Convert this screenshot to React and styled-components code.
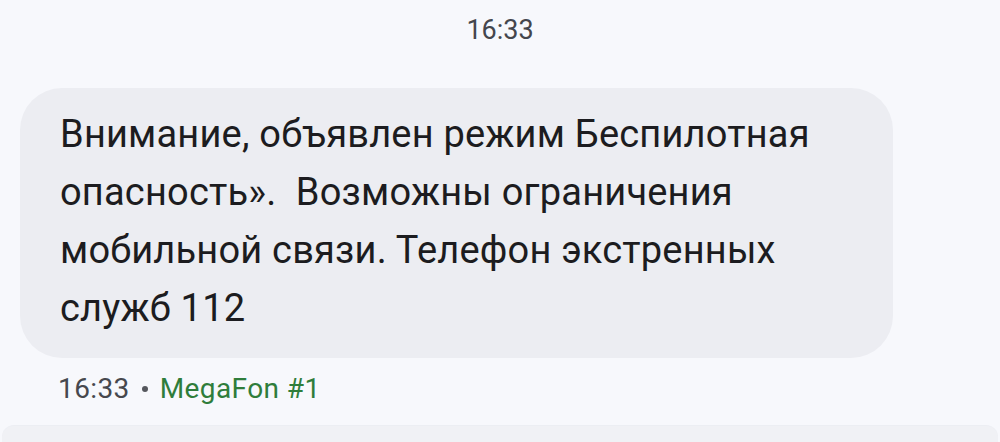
import React from 'react';
import styled, { createGlobalStyle } from 'styled-components';

const GlobalStyle = createGlobalStyle`
  html, body {
    margin: 0;
    padding: 0;
    background: #f7f8fc;
  }
  body {
    font-family: Roboto, "Noto Sans", "Liberation Sans", sans-serif;
  }
`;

const Screen = styled.div`
  width: 1000px;
  height: 442px;
  overflow: hidden;
  background: #f7f8fc;
  display: flex;
  flex-direction: column;
`;

const DayStamp = styled.div`
  text-align: center;
  font-size: 27px;
  line-height: 32px;
  color: #44464d;
  padding-top: 14px;
`;

const Bubble = styled.div`
  margin: 42px 0 0 20px;
  width: 873px;
  box-sizing: border-box;
  background: #ecedf2;
  border-radius: 42px;
  padding: 17px 40px 21px 40px;
  font-size: 38px;
  line-height: 58px;
  color: #1c1c20;
  letter-spacing: 0.2px;
`;

const Line = styled.div`
  white-space: pre;
`;

const Meta = styled.div`
  margin: 15px 0 0 58px;
  font-size: 28px;
  line-height: 32px;
  color: #46484e;
  letter-spacing: 0.4px;
  display: flex;
  align-items: center;
  gap: 12px;
`;

const Dot = styled.span`
  width: 6px;
  height: 6px;
  border-radius: 50%;
  background: #55575d;
`;

const Sender = styled.span`
  color: #2f7d3b;
`;

const NextCard = styled.div`
  margin: 20px 2px 0 2px;
  height: 40px;
  background: #f0f1f5;
  border-top: 1px solid #eceef3;
  border-radius: 12px 12px 0 0;
`;

const lines = [
  'Внимание, объявлен режим Беспилотная',
  'опасность».  Возможны ограничения',
  'мобильной связи. Телефон экстренных',
  'служб 112',
];

export default function App() {
  return (
    <Screen>
      <GlobalStyle />
      <DayStamp>16:33</DayStamp>
      <Bubble>
        {lines.map((l) => (
          <Line key={l}>{l}</Line>
        ))}
      </Bubble>
      <Meta>
        16:33
        <Dot />
        <Sender>MegaFon #1</Sender>
      </Meta>
      <NextCard />
    </Screen>
  );
}
